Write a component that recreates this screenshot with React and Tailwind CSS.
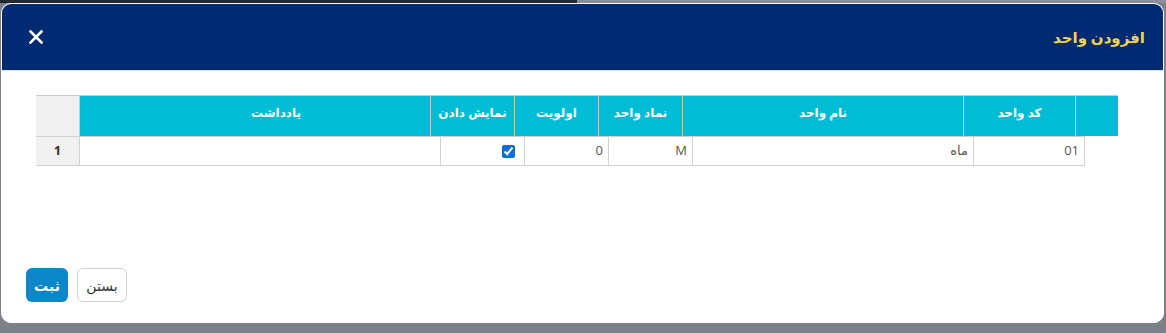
import { useState } from 'react';

/**
 * AddUnitModal — "افزودن واحد" dialog with an editable units grid
 */

const FONT = "font-['Open_Sans','DejaVu_Sans',sans-serif]";

function HeadCell({ w, children, extra = '', border = true }) {
  return (
    <div
      className={`${w} h-full flex justify-center pt-[8px] text-white font-bold text-[12px] ${
        border ? 'border-l border-[#c9c9c9]' : ''
      } ${extra}`}
    >
      {children}
    </div>
  );
}

function BodyCell({ w, children, extra = '' }) {
  return (
    <div
      className={`${w} h-full flex items-center justify-start pr-[5px] text-[13px] text-[#555] border-l border-[#d2d2d2] ${extra}`}
    >
      {children}
    </div>
  );
}

export default function App() {
  const [visible, setVisible] = useState(true);

  return (
    <div className={`w-[1166px] h-[333px] bg-[#7b8089] relative overflow-hidden ${FONT}`}>
      {/* darkened page behind the overlay */}
      <div className="flex h-[3px]">
        <div className="w-[577px] bg-[#23272e]" />
        <div className="flex-1 bg-[#8a8f98]" />
      </div>

      {/* Modal */}
      <div className="ml-[1px] w-[1163px] h-[320px] bg-white border border-white rounded-[10px] overflow-hidden flex flex-col">
        {/* Header */}
        <div className="h-[67px] shrink-0 bg-[#002b73] border-b border-[#dee2e6] flex items-center justify-between pl-[26px] pr-[18px]">
          <button className="w-[16px] h-[16px] flex items-center justify-center">
            <svg width="14" height="14" viewBox="0 0 14 14" fill="none">
              <path d="M1.5 1.5 12.5 12.5M12.5 1.5 1.5 12.5" stroke="white" strokeWidth="2.6" strokeLinecap="square" />
            </svg>
          </button>
          <h2 dir="rtl" className="text-[#f7d54a] font-bold text-[15px]">
            افزودن واحد
          </h2>
        </div>

        {/* Body */}
        <div className="flex-1 pt-[24px] pl-[34px]">
          <div dir="rtl" className="w-[1082px]">
            {/* header row */}
            <div className="h-[41px] flex border-t border-[#c9c9c9]">
              <HeadCell w="w-[43px]" extra="bg-[#00bcd4]" />
              <HeadCell w="w-[112px]" extra="bg-[#00bcd4]">کد واحد</HeadCell>
              <HeadCell w="w-[281px]" extra="bg-[#00bcd4]">نام واحد</HeadCell>
              <HeadCell w="w-[84px]" extra="bg-[#00bcd4]">نماد واحد</HeadCell>
              <HeadCell w="w-[84px]" extra="bg-[#00bcd4]">اولویت</HeadCell>
              <HeadCell w="w-[84px]" extra="bg-[#00bcd4]">نمایش دادن</HeadCell>
              <HeadCell w="w-[351px]" extra="bg-[#00bcd4] pl-[42px]">یادداشت</HeadCell>
              <HeadCell w="w-[43px]" extra="bg-[#f0f0f0]" border={false} />
            </div>

            {/* body row */}
            <div className="mr-[33px] w-[1049px] h-[30px] flex border-t border-b border-[#d2d2d2]">
              <BodyCell w="w-[112px]" extra="border-r">01</BodyCell>
              <BodyCell w="w-[281px]">ماه</BodyCell>
              <BodyCell w="w-[84px]">M</BodyCell>
              <BodyCell w="w-[84px]">0</BodyCell>
              <BodyCell w="w-[84px]" extra="pr-[9px]">
                <input
                  type="checkbox"
                  checked={visible}
                  onChange={() => setVisible(!visible)}
                  className="w-[13px] h-[13px] m-0 accent-[#0b6fd8]"
                />
              </BodyCell>
              <BodyCell w="w-[361px]" />
              <div className="w-[43px] h-full bg-[#f0f0f0] flex items-center justify-center text-[13px] font-bold text-[#333]">
                1
              </div>
            </div>
          </div>
        </div>

        {/* Footer buttons */}
        <div className="h-[54px] shrink-0 flex items-start gap-[9px] pl-[24px]">
          <button
            dir="rtl"
            className="w-[42px] h-[34px] rounded-[6px] bg-[#0a86c9] text-white font-bold text-[14px]"
          >
            ثبت
          </button>
          <button
            dir="rtl"
            className="w-[50px] h-[34px] rounded-[6px] bg-white border border-[#cfd3d8] text-[#333] text-[14px]"
          >
            بستن
          </button>
        </div>
      </div>
    </div>
  );
}
